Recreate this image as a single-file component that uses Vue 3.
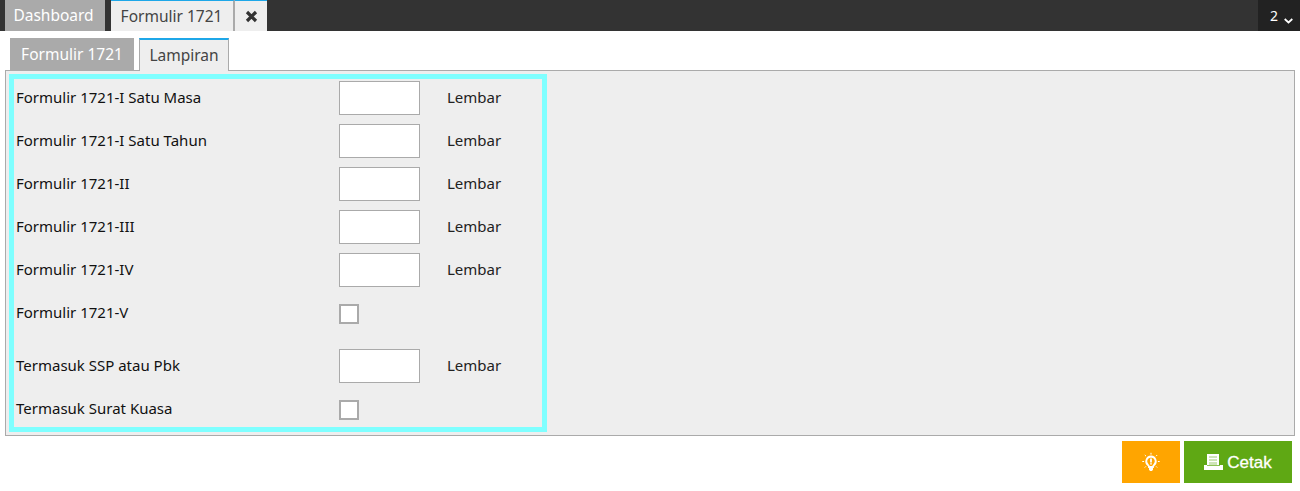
<script setup>
// Lampiran tab of the Formulir 1721 form.
const rows = [
  { label: "Formulir 1721-I Satu Masa", type: "number" },
  { label: "Formulir 1721-I Satu Tahun", type: "number" },
  { label: "Formulir 1721-II", type: "number" },
  { label: "Formulir 1721-III", type: "number" },
  { label: "Formulir 1721-IV", type: "number" },
  { label: "Formulir 1721-V", type: "check", gap: true },
  { label: "Termasuk SSP atau Pbk", type: "number" },
  { label: "Termasuk Surat Kuasa", type: "check" },
];
</script>

<template>
  <div class="page">
    <header class="topbar">
      <div class="tab-home">Dashboard</div>
      <div class="tab-open">Formulir 1721</div>
      <div class="tab-close">
        <svg width="13" height="13" viewBox="0 0 13 13">
          <path d="M2 2l9 9M11 2l-9 9" stroke="#333" stroke-width="3.2" fill="none" />
        </svg>
      </div>
      <div class="counter">
        <span>2</span>
        <svg width="9" height="6" viewBox="0 0 9 6">
          <path d="M.7 1l3.800 3.500L8.300 1" stroke="#fff" stroke-width="1.700" fill="none" />
        </svg>
      </div>
    </header>

    <nav class="subtabs">
      <div class="subtab">Formulir 1721</div>
      <div class="subtab active">Lampiran</div>
    </nav>

    <section class="panel">
      <div class="highlight">
        <div v-for="row in rows" :key="row.label" class="row" :class="{ gap: row.gap }">
          <label class="label">{{ row.label }}</label>
          <template v-if="row.type === 'number'">
            <input class="field" type="text" />
            <span class="unit">Lembar</span>
          </template>
          <span v-else class="check"></span>
        </div>
      </div>
    </section>

    <footer class="actions">
      <button class="btn hint">
        <svg width="20" height="20" viewBox="0 0 20 20" fill="none">
          <path d="M10 4.500a4.800 4.800 0 0 0-3 8.500c.7.600 1 1.200 1 2h4c0-.8.300-1.400 1-2a4.800 4.800 0 0 0-3-8.500z" stroke="#fff" stroke-width="1.800" />
          <path d="M8 14h4v3.500L11 19H9l-1-1.500z" fill="#fff" />
          <path d="M10 6.500v4M10 11.300v1.200" stroke="#fff" stroke-width="1.800" />
          <path d="M10 .8v1.800M3.800 3l1.200 1.200M16.200 3L15 4.200M1.300 9.500h1.800M16.900 9.500h1.800M3.800 15.500l1.100-1.100M16.200 15.500l-1.100-1.100" stroke="#fff" stroke-width="1" />
        </svg>
      </button>
      <button class="btn print">
        <svg width="19" height="16" viewBox="0 0 19 16">
          <path d="M3 0h12v11H3z" fill="#fff" />
          <path d="M5 2h8v9H5z" fill="#cfe5b8" />
          <path d="M5 4.500h8M5 7.500h8" stroke="#fff" stroke-width="1.200" />
          <path d="M0 11h19v5H0z" fill="#fff" />
          <path d="M3 11.500h13" stroke="#8fc257" stroke-width="1" />
        </svg>
        <span class="print-text">Cetak</span>
      </button>
    </footer>
  </div>
</template>

<style>
body {
  background: #fff;
}
</style>

<style scoped>
.page {
  width: 1300px;
  height: 491px;
  overflow: hidden;
  background: #fff;
  font-family: "Noto Sans", "Open Sans", sans-serif;
  font-size: 15px;
  color: #222;
}
.topbar {
  height: 31px;
  display: flex;
  background: #333;
  padding-left: 5px;
}
.tab-home {
  width: 100px;
  padding-right: 3px;
  box-sizing: border-box;
  background: #aaa;
  color: #fff;
  line-height: 31px;
  text-align: center;
  font-size: 15.5px;
}
.tab-open {
  margin-left: 6px;
  width: 124px;
  padding-right: 1px;
  background: #eee;
  border-top: 1px solid #1ea7e8;
  border-right: 2px solid #aaa;
  box-sizing: border-box;
  line-height: 30px;
  text-align: center;
  font-size: 15.5px;
  color: #444;
}
.tab-close {
  width: 32px;
  background: #eee;
  border-top: 1px solid #1ea7e8;
  box-sizing: border-box;
  display: flex;
  align-items: center;
  justify-content: center;
}
.counter {
  margin-left: auto;
  width: 42px;
  background: #222;
  color: #fff;
  font-size: 14px;
  display: flex;
  align-items: center;
  box-sizing: border-box;
  padding-left: 12px;
  gap: 6px;
}
.counter svg {
  margin-top: 11px;
}
.subtabs {
  display: flex;
  gap: 5px;
  height: 32px;
  margin-top: 7px;
  padding-left: 10px;
}
.subtab {
  width: 124px;
  background: #aaa;
  color: #fff;
  font-size: 15.5px;
  line-height: 32px;
  text-align: center;
}
.subtab.active {
  position: relative;
  z-index: 1;
  width: 90px;
  height: 33px;
  box-sizing: border-box;
  background: #eee;
  color: #444;
  border: 1px solid #aaa;
  border-top: 2px solid #1ea7e8;
  border-bottom: 0;
  line-height: 31px;
}
.panel {
  margin: 0 5px;
  height: 366px;
  box-sizing: border-box;
  background: #eee;
  border: 1px solid #aaa;
  padding: 3px;
}
.highlight {
  width: 538px;
  height: 358px;
  box-sizing: border-box;
  border: 5px solid #7fffff;
  padding: 2px 0 0 2px;
}
.row {
  display: flex;
  align-items: center;
  height: 34px;
  margin-bottom: 9px;
}
.row.gap {
  margin-bottom: 19px;
}
.label {
  width: 323px;
  color: #111;
  line-height: 32px;
  align-self: flex-start;
}
.field {
  width: 81px;
  height: 34px;
  box-sizing: border-box;
  border: 1px solid #aaa;
  background: #fff;
  padding: 0;
}
.unit {
  margin-left: 27px;
  color: #222;
  line-height: 32px;
  align-self: flex-start;
}
.check {
  width: 20px;
  height: 20px;
  margin-top: 2px;
  box-sizing: border-box;
  border: 2px solid #aaa;
  background: #fff;
}
.actions {
  display: flex;
  justify-content: flex-end;
  gap: 4px;
  margin-top: 5px;
  padding-right: 8px;
}
.btn {
  height: 42px;
  border: 0;
  padding: 0;
  color: #fff;
  display: flex;
  align-items: center;
  justify-content: center;
}
.hint {
  width: 58px;
  background: #ffa500;
}
.print {
  width: 108px;
  gap: 4px;
  background: #5fa814;
  font-family: "Liberation Sans", Arial, sans-serif;
  font-size: 17px;
  -webkit-text-stroke: 0.3px #fff;
}
.print-text {
  padding-top: 2px;
}
</style>
